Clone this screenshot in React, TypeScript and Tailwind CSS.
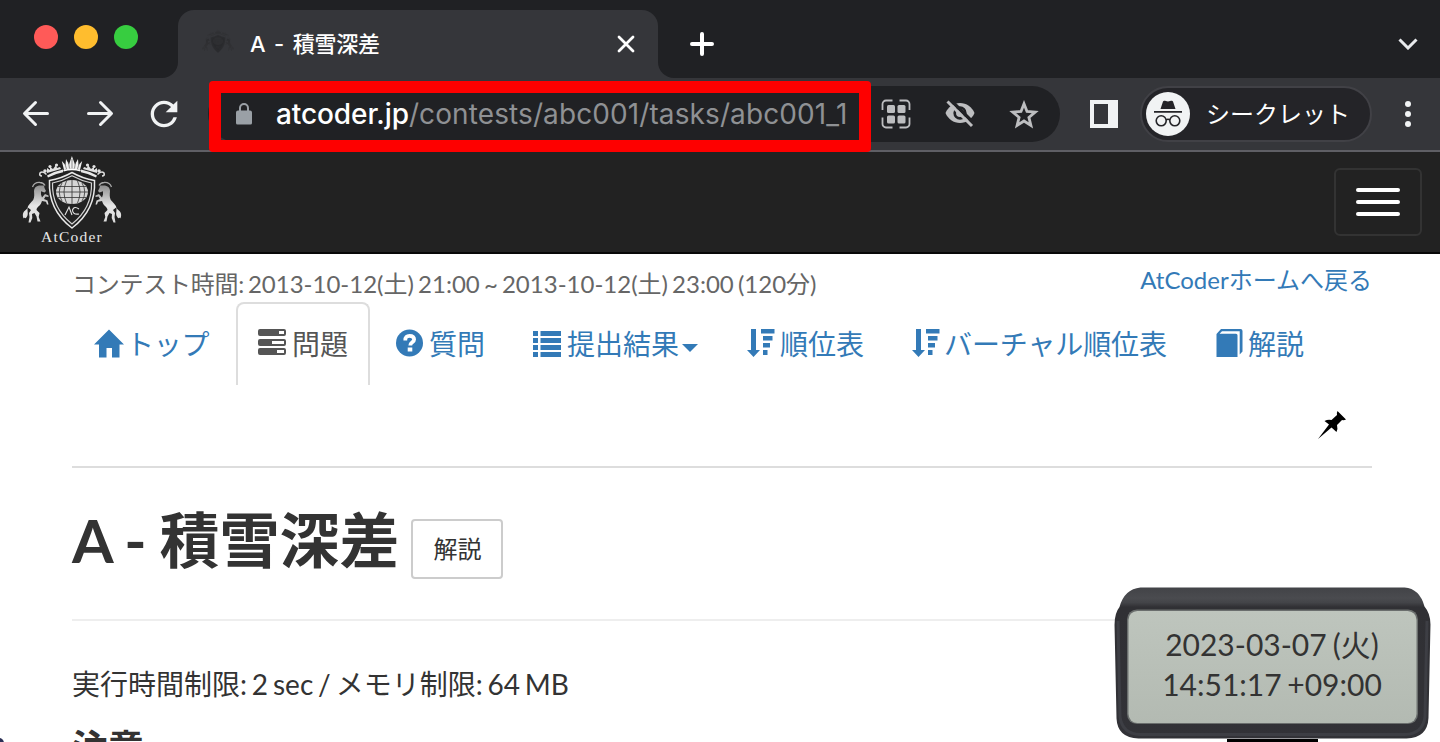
import React from "react";
import { MdRefresh } from "react-icons/md";

const LATO = "font-['Lato','Noto_Sans_CJK_JP',sans-serif]";
const UI = "font-['Inter','Noto_Sans_CJK_JP',sans-serif]";

function Crest({ className }: { className?: string }) {
  const horse =
    "M12 35c0-3 2-5 5-5.500l5 0 .5 2.500 1.500 3-1.500 1.500-3.500-1.300 0 3.300 1 3 3-3.500 3.500 1.500v1.500l-3-.5-1.500 2.500 3.500 1.500 1 4h-1.500l-1-2.800-4-.7-1 2.500c-1.500 3-4 3-4.500 6.500l3 3-.8 4 1.800 4.500h-3l-1-5-2-3.500-2.500 1 .3 4-1.800 4.500H6.500l1-5.500-.5-4 2-3-3.200-2.500c-1 3 1 6-.8 9-1 2-2 2-2.700 1C1.800 64 .2 60 1.200 57c.8-2.500 3-3 4-4.500 1-4 4-6 6-8.500 1.500-3 1-6 .8-9z";
  return (
    <svg viewBox="0 0 100 90" className={className} fill="none">
      <defs>
        <linearGradient id="silver" x1="0" y1="0" x2="0" y2="1">
          <stop offset="0" stopColor="#8f8f8f" />
          <stop offset=".55" stopColor="#e6e6e6" />
          <stop offset="1" stopColor="#dcdcdc" />
        </linearGradient>
      </defs>
      {[undefined, "translate(100 0) scale(-1 1)"].map((transform, i) => (
        <g key={i} transform={transform}>
          <path d={horse} fill="url(#silver)" />
          <path d="M10.500 31q2-5 7.500-4.500 3.500.2 5 3" stroke="#a8a8a8" strokeWidth="1.300" />
          <path d="M25 19.500q8-4.500 16-6v2.800q-8 1.500-15 5.200z" fill="#e8e8e8" />
          <path d="M24.500 18.500q-4-4-6.500-1.500-1 3 2 3" stroke="#ddd" strokeWidth="1.600" />
          <g fill="#e2e2e2">
            <circle cx="23" cy="15" r="1.800" />
            <circle cx="28" cy="10.500" r="1.600" />
            <circle cx="34.500" cy="9" r="1.600" />
            <path d="M25 17l0-5 3 2 0-3 3 2 3-4 1 3 3-1 1 2z" />
          </g>
        </g>
      ))}
      <path d="M42 14L39.800 5l3.700 4 .5-6 3 5.500L49.900 0 53 8.500 56 3l.5 6 3.700-4L58 14q-8-2.500-16 0z" fill="#f0f0f0" />
      <path d="M44.500 13l-1.500-5M47.500 12.500L46.500 6M50 12V3M52.500 12.500l1-6.500M55.500 13L57 8" stroke="#444" strokeWidth=".6" />
      <path d="M41.500 14.800q8.500-2.600 17 0" stroke="#fff" strokeWidth="1.500" />
      <path d="M27.500 24.500q12-2 22.500-8 10.500 6 22.500 8C73.500 44 66 60 50 72 34 60 26.500 44 27.500 24.500z" fill="#222" stroke="#e8e8e8" strokeWidth="1.500" />
      <path d="M30.500 27q10-2 19.500-7.200Q59.500 25 69.500 27C70 43 64 57 50 68 36 57 30 43 30.500 27z" stroke="#d2d2d2" strokeWidth="1.200" />
      <ellipse cx="50" cy="36" rx="16" ry="12" fill="#d5d5d5" />
      <path d="M50 24v24M34 36h32M36 30.500h28M36 41.500h28M44.500 25q-5 11 0 22M55.500 25q5 11 0 22M40 27q-5.500 9 0 18M60 27q5.500 9 0 18" stroke="#333" strokeWidth=".8" />
      <path d="M43 59l4-8 3 8M57 53q-5-3.500-6.500 1 0 5 6.500 4" stroke="#e5e5e5" strokeWidth="1.100" />
    </svg>
  );
}

function HomeIcon() {
  return (
    <svg viewBox="0 0 30 28" className="h-[29px] w-[30px] shrink-0" fill="currentColor">
      <path d="M15 0l15 15h-4.500v13H18v-9.500h-5.500V28H5V15H0z" />
    </svg>
  );
}
function TasksIcon() {
  return (
    <svg viewBox="0 0 28 27" className="h-[27px] w-7" fill="currentColor">
      <path fillRule="evenodd" d="M2 0h24a2 2 0 012 2v3a2 2 0 01-2 2H2a2 2 0 01-2-2V2a2 2 0 012-2zM21 2v3h5V2zM2 10h24a2 2 0 012 2v3a2 2 0 01-2 2H2a2 2 0 01-2-2v-3a2 2 0 012-2zM14 12v3h12v-3zM2 19h24a2 2 0 012 2v3a2 2 0 01-2 2H2a2 2 0 01-2-2v-3a2 2 0 012-2zM19 21v3h7v-3z" />
    </svg>
  );
}
function QuestionIcon() {
  return (
    <svg viewBox="0 0 28 28" className="h-7 w-7">
      <circle cx="13.500" cy="14" r="13.500" fill="currentColor" />
      <path d="M9.300 11.500C9.100 8 11 6.800 13.500 6.800c2.700 0 4.600 1.300 4.600 3.700 0 3-3.800 2.700-3.800 6" fill="none" stroke="#fff" strokeWidth="3.800" />
      <path d="M11.700 18.500h4.600v4h-4.600z" fill="#fff" />
    </svg>
  );
}
function ListIcon() {
  return (
    <svg viewBox="0 0 28 26" className="mt-0.5 h-[26px] w-7" fill="currentColor">
      <path d="M0 0h5v5H0zM7.500 0H28v5H7.500zM0 7h5v5H0zM7.500 7H28v5H7.500zM0 14h5v5H0zM7.500 14H28v5H7.500zM0 21h5v5H0zM7.500 21H28v5H7.500z" />
    </svg>
  );
}
function SortIcon() {
  return (
    <svg viewBox="0 0 28 28" className="h-7 w-7" fill="currentColor">
      <path d="M4 0h5v21h4L6.500 28 0 21h4zM14 0h13.500v4.500H14zM16 7h9.500v4.500H16zM16 14h7v4.500h-7zM16 21h4.500v5H16z" />
    </svg>
  );
}
function BookIcon() {
  return (
    <svg viewBox="0 0 28 28" className="h-7 w-7" fill="currentColor">
      <path d="M.5 5L5 0h19.500a2 2 0 012 2v20.500L23.700 25.500V2.200H6L3.500 4.800H20a1.500 1.500 0 011.500 1.500V28H.5z" />
    </svg>
  );
}
function Caret() {
  return (
    <svg viewBox="0 0 16 8" className="ml-[3px] mt-[7px] h-2 w-4" fill="currentColor">
      <path d="M0 0h16L8 8z" />
    </svg>
  );
}

function NavTab({ icon, label, active, caret, width, text = "ml-[5px]" }: { icon: React.ReactNode; label: string; active?: boolean; caret?: boolean; width: string; text?: string }) {
  return (
    <li
      className={`mr-1 flex h-[83px] shrink-0 items-start whitespace-nowrap rounded-t-lg border-2 border-b-0 pl-5 pt-[25px] ${width} ${
        active ? "border-[#ddd] text-[#555]" : "border-transparent text-[#337ab7]"
      }`}
    >
      <span className="flex w-7 shrink-0">{icon}</span>
      <span className={`-mt-px text-[28px] leading-[32px] ${text}`}>{label}</span>
      {caret && <span className="-mt-px flex h-8 items-center"><Caret /></span>}
    </li>
  );
}

function TabStrip() {
  return (
    <div className="flex h-[78px] bg-[#35363a]">
      <div className="flex w-[178px] items-start gap-4 rounded-br-2xl bg-[#202124] pl-[34px] pt-[25px]">
        <span className="size-6 rounded-full bg-[#ff5a58]" />
        <span className="size-6 rounded-full bg-[#ffbd2e]" />
        <span className="size-6 rounded-full bg-[#37cd40]" />
      </div>
      <div className="w-[480px] bg-[#202124] pt-2.5">
        <div className="flex h-[68px] items-center rounded-t-2xl bg-[#35363a] pl-6 pr-[23px]">
          <Crest className="h-[30px] w-8 opacity-25 brightness-[.15]" />
          <span className="ml-4 flex-1 text-[22px] font-medium tracking-[-0.200px] text-white [word-spacing:3px]">A - 積雪深差</span>
          <svg viewBox="0 0 18 18" className="size-[18px]" stroke="#fff" strokeWidth="2.800" strokeLinecap="round">
            <path d="M2 2l14 14M16 2L2 16" />
          </svg>
        </div>
      </div>
      <div className="flex flex-1 items-center justify-between rounded-bl-2xl bg-[#202124] pl-8 pr-[22px] pt-2.5">
        <svg viewBox="0 0 24 24" className="size-6" stroke="#fff" strokeWidth="4" strokeLinecap="round">
          <path d="M12 2v20M2 12h20" />
        </svg>
        <svg viewBox="0 0 20 12" className="h-3 w-5" fill="none" stroke="#e8eaed" strokeWidth="3">
          <path d="M1.500 1.500L10 10l8.500-8.500" />
        </svg>
      </div>
    </div>
  );
}

function Toolbar() {
  return (
    <div className={`relative flex h-[74px] items-center border-b-2 border-[#5f5f65] bg-[#35363a] text-[#f1f3f4] ${UI}`}>
      <div className="flex w-[208px] items-center pl-[22px]">
        <svg viewBox="0 0 28 28" className="size-7" fill="none" stroke="currentColor" strokeWidth="3" strokeLinecap="round" strokeLinejoin="round">
          <path d="M25.500 13.500H3M13.500 2.500l-11 11 11 11" />
        </svg>
        <svg viewBox="0 0 28 28" className="ml-9 size-7" fill="none" stroke="currentColor" strokeWidth="3" strokeLinecap="round" strokeLinejoin="round">
          <path d="M2.500 13.500H25M14.500 2.500l11 11-11 11" />
        </svg>
        <MdRefresh className="ml-[30px] size-10" />
      </div>
      <div className="flex h-14 w-[852px] items-center rounded-full bg-[#202124] pl-7 text-[#bdbec0]">
        <svg viewBox="0 0 16 22" className="h-[22px] w-4 shrink-0" fill="#9aa0a6">
          <path fillRule="evenodd" d="M3 7.500V5a5 5 0 0110 0v2.500h1a2 2 0 012 2V20a1.500 1.500 0 01-1.500 1.500h-13A1.500 1.500 0 010 20V9.500a2 2 0 012-2zM5 7.500h6V5a3 3 0 00-6 0z" />
        </svg>
        <span className="ml-6 w-[606px] shrink-0 whitespace-nowrap text-[28px] leading-8 tracking-[0.100px] text-[#8f9194]">
          <span className="font-medium tracking-[-0.100px] text-white">atcoder.jp</span>/contests/abc001/tasks/abc001_1
        </span>
        <svg viewBox="0 0 30 30" className="-ml-px size-[30px] shrink-0" fill="none" stroke="currentColor" strokeWidth="1.800">
          <path d="M1.500 11V5a3.500 3.500 0 013.500-3.500h6.500M18.500 1.500H25A3.500 3.500 0 0128.500 5v6M28.500 18.500V25a3.500 3.500 0 01-3.500 3.500h-6.500M11.500 28.500H5A3.500 3.500 0 011.500 25v-6.500" />
          <g fill="currentColor" stroke="none">
            <rect x="6" y="6" width="8" height="8" rx="1.500" />
            <rect x="16.500" y="6" width="8" height="8" rx="1.500" />
            <rect x="6" y="16.500" width="8" height="8" rx="1.500" />
            <rect x="16.500" y="16.500" width="8" height="8" rx="1.500" />
          </g>
        </svg>
        <svg viewBox="0 0 32 32" className="ml-[33px] size-8 shrink-0">
          <path d="M1.500 15C4 9 9.500 5 16 5s12 4 14.500 10C28 21 22.500 25 16 25S4 21 1.500 15z" fill="currentColor" />
          <circle cx="16" cy="15" r="5.300" fill="currentColor" stroke="#202124" strokeWidth="2.700" />
          <path d="M6 1.500L31 26.500" stroke="#202124" strokeWidth="3.600" />
          <path d="M3.500 3.500L28 28" stroke="currentColor" strokeWidth="3" />
        </svg>
        <svg viewBox="0 0 30 29" className="ml-[33px] h-[29px] w-[30px] shrink-0" fill="none" stroke="currentColor" strokeWidth="2.800">
          <path d="M15 3.800l3 7.700 8.200.6-6.300 5.300 2 8L15 21l-6.900 4.400 2-8-6.300-5.300 8.200-.6z" />
        </svg>
      </div>
      <svg viewBox="0 0 28 28" className="ml-[30px] size-7" fill="currentColor">
        <path fillRule="evenodd" d="M0 0h28v28H0zM4 4v20h14V4z" />
      </svg>
      <div className="ml-[22px] flex h-14 w-[232px] items-center rounded-full border-2 border-[#414146] bg-[#242428] pl-1">
        <svg viewBox="0 0 44 44" className="size-11">
          <circle cx="22" cy="22" r="22" fill="#f1f3f4" />
          <path d="M14.500 17l2.500-7.500q.5-1.200 2-.7l3 .8 3-.8q1.500-.5 2 .7l2.500 7.500zM8 19h28v1.800H8z" fill="#242428" />
          <g fill="none" stroke="#242428" strokeWidth="1.600">
            <circle cx="15.200" cy="28.800" r="5" />
            <circle cx="28.800" cy="28.800" r="5" />
            <path d="M20 28q2-1.500 4 0" />
          </g>
        </svg>
        <span className="ml-4 mt-0.5 text-[24px] leading-8 text-white">シークレット</span>
      </div>
      <svg viewBox="0 0 6 26" className="ml-[33px] h-[26px] w-1.5" fill="currentColor">
        <circle cx="3" cy="3" r="3" /><circle cx="3" cy="13" r="3" /><circle cx="3" cy="23" r="3" />
      </svg>
      <div className="absolute left-[209px] top-[3px] h-[71px] w-[662px] rounded border-[12px] border-[#fe0000]" />
    </div>
  );
}

function Clock() {
  return (
    <div className="absolute bottom-0 right-[9px] flex h-[155px] w-[317px] flex-col items-center">
      <div className="relative h-[151.500px] w-full">
        <svg viewBox="0 0 317 152" className="absolute inset-0 h-full w-full">
          <defs>
            <linearGradient id="lid" x1="0" y1="0" x2="0" y2="1">
              <stop offset="0" stopColor="#424347" />
              <stop offset=".07" stopColor="#4a4b4f" />
              <stop offset=".1" stopColor="#434448" />
              <stop offset=".13" stopColor="#303034" />
              <stop offset="1" stopColor="#323237" />
            </linearGradient>
            <linearGradient id="lcd" x1="0" y1="0" x2="0" y2="1">
              <stop offset="0" stopColor="#bec5bd" />
              <stop offset="1" stopColor="#b3bab2" />
            </linearGradient>
          </defs>
          <path d="M26 .5h265q15 1 20 19 6 7 6 18l-2 94q-1 20-22 20.500H24Q3 151.500 2 132L0 38Q0 26 5 20 10 2 26 .5z" fill="url(#lid)" />
          <path d="M3.500 34l2 96q2 17 20 18h266q18-1 20-18l2-96" fill="none" stroke="#3d3e44" strokeWidth="3" />
          <rect x="12.500" y="22.500" width="292" height="115" rx="10" fill="#6a6e6d" />
          <rect x="14" y="24" width="289" height="112.500" rx="9" fill="url(#lcd)" />
        </svg>
        <div className="relative pt-[37px] text-center text-[30px] leading-[40px] text-[#333]">
          <div className="-ml-px [word-spacing:-1.500px]">2023-03-07 (火)</div>
          <div className="-ml-px [word-spacing:-2px]">14:51:17 +09:00</div>
        </div>
      </div>
      <div className="h-[3.500px] w-[91px] bg-black" />
    </div>
  );
}

export default function App() {
  return (
    <div className={`relative h-[742px] w-[1440px] overflow-hidden bg-white text-[#333] ${LATO}`}>
      <div className={UI}>
        <TabStrip />
      </div>
      <Toolbar />
      <header className="flex h-[102px] justify-between border-b-2 border-[#080808] bg-[#222] pl-[22px] pr-[18px]">
        <div className="flex w-[100px] flex-col items-center pt-1 font-['Liberation_Serif',serif]">
          <Crest className="h-[90px] w-[100px] shrink-0" />
          <span className="-mt-[17px] text-[15.500px] leading-4 tracking-[1.200px] text-[#e6e6e6]">AtCoder</span>
        </div>
        <div className="mt-4 flex h-[68px] w-[88px] flex-col items-center justify-center gap-2 rounded-md border-2 border-[#333]">
          <span className="h-1 w-11 rounded-sm bg-white" />
          <span className="h-1 w-11 rounded-sm bg-white" />
          <span className="h-1 w-11 rounded-sm bg-white" />
        </div>
      </header>
      <main className="pl-[72px] pr-[68px]">
        <div className="flex h-12 justify-between text-[24px]">
          <span className="pt-[14px] leading-8 text-[#666] [word-spacing:-2px]">
            <span className="tracking-[-0.250px]">コンテスト時間: </span>2013-10-12(土) 21:00 ~ 2013-10-12(土) 23:00 (120分)
          </span>
          <span className="pt-[10px] leading-8 text-[#337ab7]">AtCoderホームへ戻る</span>
        </div>
        <ul className="flex">
          <NavTab icon={<HomeIcon />} label="トップ" width="w-[160px]" text="ml-1 tracking-[-0.200px]" />
          <NavTab icon={<TasksIcon />} label="問題" active width="w-[134px]" text="ml-1.5" />
          <NavTab icon={<QuestionIcon />} label="質問" width="w-[133px]" />
          <NavTab icon={<ListIcon />} label="提出結果" caret width="w-[210px]" text="ml-1.5" />
          <NavTab icon={<SortIcon />} label="順位表" width="w-[161px]" />
          <NavTab icon={<SortIcon />} label="バーチャル順位表" width="w-[300px]" text="ml-1 tracking-[-0.100px]" />
          <NavTab icon={<BookIcon />} label="解説" width="w-[134px]" text="ml-1" />
        </ul>
        <div className="flex h-[83px] justify-end border-b-2 border-[#ddd] pr-[26px] pt-[26px]">
          <svg viewBox="0 0 28 28" className="size-7" fill="#000">
            <path d="M19.500 0l8.500 8.500q-2 1-4 .5l-5 5q1 3.500-.5 7l-5-4.500L0 28 11 13.500 6.500 10q3.500-2 7-1l5.500-5q-.5-2 .5-4z" />
          </svg>
        </div>
        <div className="flex h-[153px] items-start border-b-2 border-[#eee]">
          <h1 className="mt-[39px] whitespace-nowrap text-[60px] font-bold leading-[66px] [word-spacing:-1.900px]">A - 積雪深差</h1>
          <span className="ml-3 mt-[51px] flex h-[60px] w-[92px] items-center justify-center rounded border-2 border-[#ccc] text-[24px] leading-8">解説</span>
        </div>
        <p className="mt-[43px] text-[28px] leading-10 [word-spacing:-2.300px]">実行時間制限: 2 sec / メモリ制限: 64 MB</p>
        <h3 className="mt-[23px] text-[36px] font-bold leading-10">注意</h3>
      </main>
      <Clock />
      <span className="absolute -bottom-1.5 -left-1.5 size-2.5 rounded-full bg-[#2b2f55]" />
    </div>
  );
}
